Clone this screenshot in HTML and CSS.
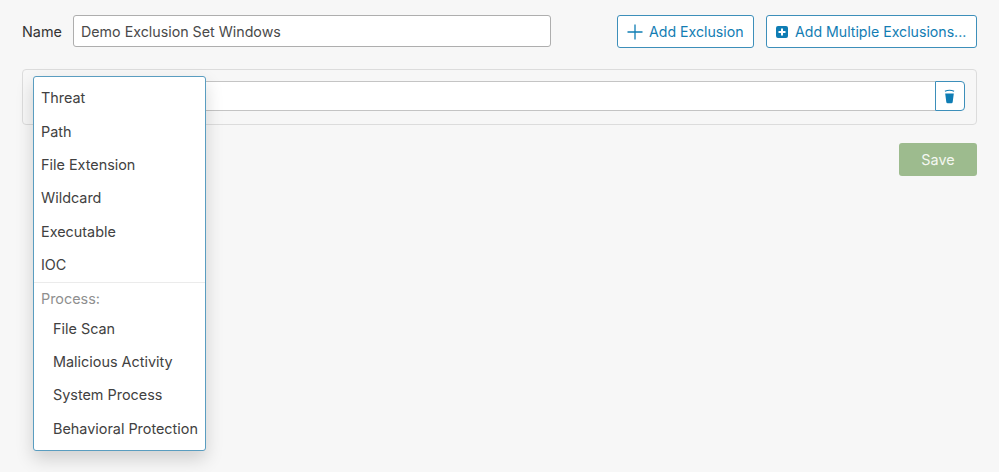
FILE: index.html
```html
<!DOCTYPE html>
<html lang="en">
<head>
<meta charset="utf-8">
<title>Exclusion Set</title>
<link rel="stylesheet" href="styles.css">
</head>
<body>
<main class="page">
  <div class="top-row">
    <label class="name-label" for="set-name">Name</label>
    <input class="name-input" id="set-name" type="text" value="Demo Exclusion Set Windows">
    <div class="actions">
      <button class="btn btn-add" type="button">
        <svg class="icon-plus" width="16" height="16" viewBox="0 0 16 16"><path d="M8 .5v15M.5 8h15" fill="none" stroke="#0f7db4" stroke-width="1.3"/></svg>
        Add Exclusion
      </button>
      <button class="btn btn-multi" type="button">
        <svg class="icon-box" width="12" height="12" viewBox="0 0 12 12"><path fill-rule="evenodd" fill="#0f7db4" d="M2 0h8a2 2 0 0 1 2 2v8a2 2 0 0 1-2 2H2a2 2 0 0 1-2-2V2a2 2 0 0 1 2-2zM5 2.500V5H2.500v2H5v2.500h2V7h2.500V5H7V2.500z"/></svg>
        Add Multiple Exclusions...
      </button>
    </div>
  </div>

  <section class="panel">
    <div class="exclusion-row">
      <div class="exclusion-field"></div>
      <button class="btn-delete" type="button" aria-label="Delete">
        <svg width="11" height="15" viewBox="0 0 12 16"><path fill="none" stroke="#0f7db4" stroke-width="1.200" d="M1 2.200C4 .9 8 .9 11 2.200"/><path fill="#0f7db4" d="M1.300 4.600h9.400L9.500 14a1.500 1.500 0 0 1-1.500 1.300H4A1.500 1.500 0 0 1 2.500 14z"/></svg>
      </button>
    </div>
    <ul class="menu">
      <li class="menu-item">Threat</li>
      <li class="menu-item">Path</li>
      <li class="menu-item">File Extension</li>
      <li class="menu-item">Wildcard</li>
      <li class="menu-item">Executable</li>
      <li class="menu-item">IOC</li>
      <li class="menu-heading">Process:</li>
      <li class="menu-item sub">File Scan</li>
      <li class="menu-item sub">Malicious Activity</li>
      <li class="menu-item sub">System Process</li>
      <li class="menu-item sub">Behavioral Protection</li>
    </ul>
  </section>

  <div class="footer-row">
    <button class="btn-save" type="button">Save</button>
  </div>
</main>
</body>
</html>
```

FILE: styles.css
```css
* { box-sizing: border-box; }

html, body {
  margin: 0;
  height: 100%;
  overflow: hidden;
  background: #f7f7f7;
  font-family: Inter, "Liberation Sans", sans-serif;
  font-size: 14.4px;
  color: #3f3f3f;
}

.page {
  width: 999px;
  padding: 15px 22px 0;
}

.top-row {
  display: flex;
  align-items: flex-start;
}

.name-label {
  width: 51px;
  line-height: 33px;
  color: #333;
}

.name-input {
  width: 478px;
  height: 32px;
  padding: 0 7px;
  border: 1px solid #aeaeae;
  border-radius: 3px;
  background: #fff;
  font: inherit;
  font-size: 14.25px;
  color: #4a4a4a;
  outline: none;
}

.actions {
  margin-left: auto;
  display: flex;
  gap: 12px;
}

.btn {
  display: flex;
  align-items: center;
  height: 33px;
  border: 1px solid #3d8fba;
  border-radius: 3px;
  background: #fff;
  color: #137db3;
  font: inherit;
  font-size: 14.15px;
  white-space: nowrap;
}

.btn-add {
  width: 137px;
  padding: 0 0 0 9px;
  gap: 6px;
}

.btn-multi {
  width: 211px;
  padding: 0 0 0 9px;
  gap: 7px;
}

.panel {
  position: relative;
  margin-top: 21px;
  height: 56px;
  padding: 11px 11px 0 11px;
  border: 1px solid #dcdcdc;
  border-radius: 4px;
  background: #f7f7f7;
}

.exclusion-row {
  display: flex;
  height: 30px;
}

.exclusion-field {
  flex: 1;
  border: 1px solid #c4c4c4;
  border-right: 0;
  border-radius: 3px 0 0 3px;
  background: #fff;
}

.btn-delete {
  display: flex;
  align-items: center;
  justify-content: center;
  width: 30px;
  padding: 0 2px 0 0;
  border: 1px solid #3d8fba;
  border-radius: 0 4px 4px 0;
  background: #fff;
}

.menu {
  position: absolute;
  left: 10px;
  top: 6px;
  width: 173px;
  height: 375px;
  margin: 0;
  padding: 4.300px 0 0;
  list-style: none;
  border: 1px solid #5a9dc0;
  border-radius: 3px;
  background: #fff;
  box-shadow: 0 8px 18px rgba(0, 0, 0, 0.16);
}

.menu-item {
  height: 33.400px;
  padding-left: 7px;
  line-height: 33.400px;
  color: #414141;
}

.menu-item.sub {
  padding-left: 19px;
  white-space: nowrap;
}

.menu-heading {
  height: 30px;
  padding: 3px 0 0 7px;
  line-height: 26px;
  border-top: 1px solid #ebebeb;
  color: #8f8f8f;
}

.footer-row {
  display: flex;
  justify-content: flex-end;
  margin-top: 18px;
}

.btn-save {
  width: 78px;
  height: 33px;
  border: 0;
  border-radius: 3px;
  background: #9dbb8e;
  color: #f4f7f1;
  font: inherit;
}
```
